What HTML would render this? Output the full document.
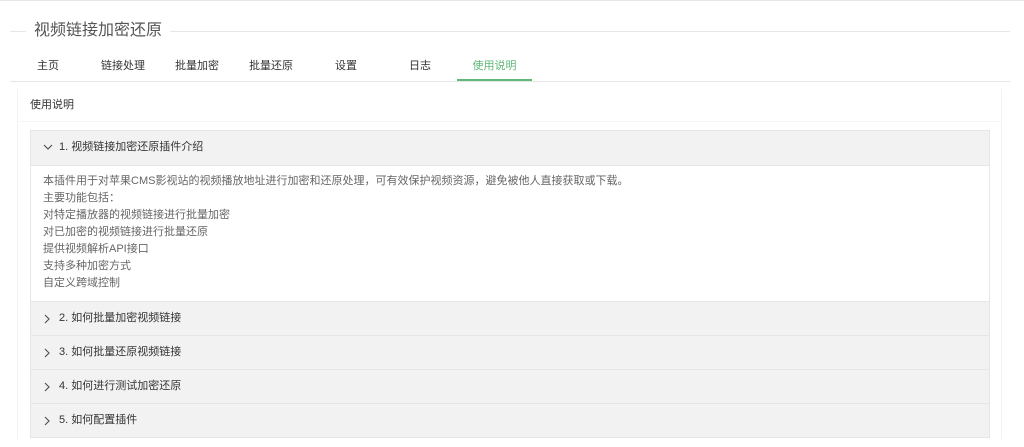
<!DOCTYPE html>
<html style="overflow:hidden;height:447px"><head><meta charset="utf-8"><style>
*{margin:0;padding:0;box-sizing:border-box}
body{width:1024px;height:447px;overflow:hidden;background:#fff;font-family:"Liberation Sans","Noto Sans CJK SC",sans-serif;font-size:11px;color:#333;position:relative;border-top:1px solid #e6e6e6}
.abs{position:absolute}
.tl{left:10px;top:30px;width:1000px;height:1px;background:#e6e6e6}
.title{left:26px;top:19px;padding:0 8px;background:#fff;font-size:16px;color:#555;line-height:22px}
.tabs{left:10px;top:52px;width:1000px;height:29px;border-bottom:1px solid #e6e6e6}
.tab{position:absolute;top:0;line-height:26px;text-align:center;font-size:11px;color:#333}
.tab.on{color:#5fb878;border-bottom:2px solid #5fb878}
.card{left:17px;top:88px;width:985px;height:350px;border-left:1px solid #f2f2f2;border-right:1px solid #f2f2f2}
.ch{left:17px;top:88px;width:985px;height:33px;border-bottom:1px solid #f6f6f6;line-height:33px;padding-left:13px}
.col{left:30px;top:129px;width:960px;border:1px solid #e6e6e6}
.it{height:34px;background:#f2f2f2;border-top:1px solid #e6e6e6;line-height:33px;padding-left:28px;position:relative;color:#333}
.it:first-child{border-top:0;height:34px}
.it svg{position:absolute;left:12px;top:12px}
.ct{padding:7px 12px 6px;line-height:17px;color:#666;border-top:1px solid #e6e6e6;height:136px}
</style></head><body>
<div class="abs tl"></div>
<div class="abs title">视频链接加密还原</div>
<div class="abs tabs">
<div class="tab" style="left:16px;width:44px">主页</div>
<div class="tab" style="left:82px;width:62px">链接处理</div>
<div class="tab" style="left:156px;width:62px">批量加密</div>
<div class="tab" style="left:230px;width:62px">批量还原</div>
<div class="tab" style="left:316px;width:40px">设置</div>
<div class="tab" style="left:390px;width:40px">日志</div>
<div class="tab on" style="left:447px;width:75px">使用说明</div>
</div>
<div class="abs card"></div>
<div class="abs ch">使用说明</div>
<div class="abs col">
<div class="it"><svg width="10" height="8" viewBox="0 0 10 8"><path d="M1 2l4 4 4-4" fill="none" stroke="#555" stroke-width="1.2"/></svg>1. 视频链接加密还原插件介绍</div>
<div class="ct">本插件用于对苹果CMS影视站的视频播放地址进行加密和还原处理，可有效保护视频资源，避免被他人直接获取或下载。<br>主要功能包括：<br>对特定播放器的视频链接进行批量加密<br>对已加密的视频链接进行批量还原<br>提供视频解析API接口<br>支持多种加密方式<br>自定义跨域控制</div>
<div class="it"><svg width="8" height="10" viewBox="0 0 8 10"><path d="M2 1l4 4-4 4" fill="none" stroke="#555" stroke-width="1.2"/></svg>2. 如何批量加密视频链接</div>
<div class="it"><svg width="8" height="10" viewBox="0 0 8 10"><path d="M2 1l4 4-4 4" fill="none" stroke="#555" stroke-width="1.2"/></svg>3. 如何批量还原视频链接</div>
<div class="it"><svg width="8" height="10" viewBox="0 0 8 10"><path d="M2 1l4 4-4 4" fill="none" stroke="#555" stroke-width="1.2"/></svg>4. 如何进行测试加密还原</div>
<div class="it"><svg width="8" height="10" viewBox="0 0 8 10"><path d="M2 1l4 4-4 4" fill="none" stroke="#555" stroke-width="1.2"/></svg>5. 如何配置插件</div>
</div>
</body></html>
